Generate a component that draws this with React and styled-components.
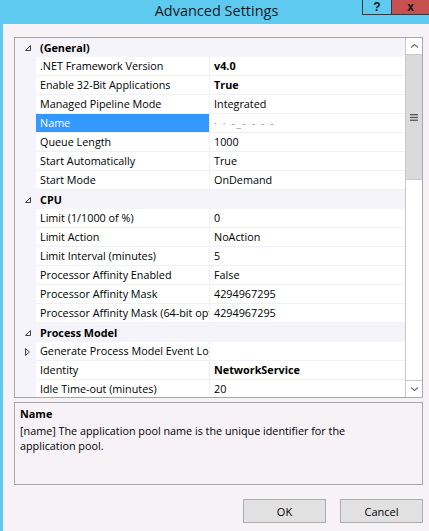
import React from "react";
import styled, { createGlobalStyle } from "styled-components";

const GlobalStyle = createGlobalStyle`
  html, body {
    margin: 0;
    padding: 0;
    background: #f6f2f6;
  }
  body {
    font-family: "Open Sans", "Noto Sans", "Liberation Sans", sans-serif;
    font-size: 10.8px;
    color: #000;
  }
`;

const Window = styled.div`
  width: 429px;
  height: 531px;
  box-sizing: border-box;
  border-left: 3px solid #5fcaf0;
  background: #f6f2f6;
  display: flex;
  flex-direction: column;
  overflow: hidden;
`;

const TitleBar = styled.div`
  height: 24px;
  flex: 0 0 24px;
  margin-left: -3px;
  background: #5fcaf0;
  display: grid;
  grid-template-columns: 1fr auto 1fr;
  align-items: start;
`;

const Title = styled.div`
  grid-column: 2;
  font-size: 14.5px;
  line-height: 21px;
  color: #1a1a1a;
  padding-left: 4px;
`;

const Controls = styled.div`
  grid-column: 3;
  justify-self: end;
  display: flex;
`;

const ControlButton = styled.div`
  height: 15px;
  width: ${(p) => p.$w}px;
  box-sizing: border-box;
  background: ${(p) => (p.$close ? "#c75050" : "transparent")};
  border: 1px solid #2e3b42;
  border-top: none;
  border-right: ${(p) => (p.$close ? "none" : "1px solid #2e3b42")};
  border-left: ${(p) => (p.$close ? "none" : "1px solid #2e3b42")};
  display: flex;
  align-items: center;
  justify-content: center;
  font-family: "Liberation Sans", sans-serif;
  font-weight: bold;
  font-size: 12px;
  line-height: 1;
  color: #111;
`;

const Content = styled.div`
  flex: 1;
  padding: 13px 6px 0 11px;
  display: flex;
  flex-direction: column;
`;

const Grid = styled.div`
  height: 361px;
  box-sizing: border-box;
  border: 1px solid #a7a7a7;
  background: #f4f4fa;
  display: flex;
  overflow: hidden;
`;

const Rows = styled.div`
  flex: 1;
  display: flex;
  flex-direction: column;
`;

const Row = styled.div`
  height: 19px;
  flex: 0 0 19px;
  display: grid;
  grid-template-columns: 21px 174px 1fr;
  background: #f4f4fa;
`;

const Toggle = styled.div`
  display: flex;
  align-items: center;
  justify-content: center;
  padding-left: 4px;
  color: #555;
`;

const Category = styled.div`
  grid-column: 2 / 4;
  padding-left: 4px;
  font-weight: bold;
  line-height: 19px;
  white-space: nowrap;
`;

const NameCell = styled.div`
  background: ${(p) => (p.$selected ? "#3399ff" : "#fff")};
  color: ${(p) => (p.$selected ? "#fff" : "#000")};
  border-bottom: 1px solid #f0f0f6;
  border-right: 1px solid #f0f0f6;
  box-sizing: border-box;
  padding-left: 4px;
  line-height: 18px;
  white-space: nowrap;
  overflow: hidden;
`;

const ValueCell = styled.div`
  background: #fff;
  border-bottom: 1px solid #f0f0f6;
  box-sizing: border-box;
  padding-left: 4px;
  line-height: 18px;
  white-space: nowrap;
  overflow: hidden;
  font-weight: ${(p) => (p.$bold ? "bold" : "normal")};
  color: ${(p) => (p.$masked ? "#9a9a9a" : "#000")};
  letter-spacing: ${(p) => (p.$masked ? "1.5px" : "normal")};
`;

const ScrollBar = styled.div`
  width: 16px;
  flex: 0 0 16px;
  border-left: 1px solid #c8c8c8;
  background: #f0f0f0;
  display: flex;
  flex-direction: column;
`;

const ArrowButton = styled.div`
  height: 17px;
  flex: 0 0 17px;
  box-sizing: border-box;
  background: #fff;
  border-bottom: ${(p) => (p.$down ? "none" : "1px solid #c8c8c8")};
  border-top: ${(p) => (p.$down ? "1px solid #c8c8c8" : "none")};
  display: flex;
  align-items: center;
  justify-content: center;
`;

const Thumb = styled.div`
  height: 124px;
  flex: 0 0 124px;
  background: #dadada;
  border-bottom: 1px solid #c8c8c8;
  display: flex;
  align-items: center;
  justify-content: center;
`;

const Track = styled.div`
  flex: 1;
  background: #fff;
`;

const Description = styled.div`
  margin-top: 4px;
  height: 83px;
  box-sizing: border-box;
  border: 1px solid #a7a7a7;
  padding: 2px 5px;
`;

const DescTitle = styled.div`
  font-weight: bold;
  line-height: 18px;
`;

const DescText = styled.div`
  line-height: 15px;
  width: 360px;
`;

const Footer = styled.div`
  margin-top: 14px;
  display: flex;
  justify-content: flex-end;
  gap: 14px;
`;

const Button = styled.button`
  width: 83px;
  height: 24px;
  box-sizing: border-box;
  background: #e1e1e1;
  border: 1px solid #adadad;
  font-family: inherit;
  font-size: 11px;
  color: #000;
  padding: 0;
`;

const Chevron = ({ down }) => (
  <svg width="9" height="6" viewBox="0 0 9 6">
    <path
      d={down ? "M1 1.5 L4.5 4.5 L8 1.5" : "M1 4.5 L4.5 1.5 L8 4.5"}
      fill="none"
      stroke="#707070"
      strokeWidth="1.2"
    />
  </svg>
);

const Grip = () => (
  <svg width="8" height="7" viewBox="0 0 8 7">
    <rect x="0" y="0" width="8" height="1.3" fill="#555" />
    <rect x="0" y="2.8" width="8" height="1.3" fill="#555" />
    <rect x="0" y="5.6" width="8" height="1.3" fill="#555" />
  </svg>
);

const Expanded = () => (
  <svg width="6" height="6" viewBox="0 0 6 6">
    <path d="M5.5 0.5 L5.5 5.5 L0.5 5.5 Z" fill="none" stroke="#444" strokeWidth="1" />
  </svg>
);

const Collapsed = () => (
  <svg width="5" height="8" viewBox="0 0 5 8">
    <path d="M0.5 0.5 L4.5 4 L0.5 7.5 Z" fill="none" stroke="#444" strokeWidth="1" />
  </svg>
);

const sections = [
  {
    title: "(General)",
    items: [
      { name: ".NET Framework Version", value: "v4.0", bold: true },
      { name: "Enable 32-Bit Applications", value: "True", bold: true },
      { name: "Managed Pipeline Mode", value: "Integrated" },
      { name: "Name", value: "· · -_- - - -", selected: true, masked: true },
      { name: "Queue Length", value: "1000" },
      { name: "Start Automatically", value: "True" },
      { name: "Start Mode", value: "OnDemand" },
    ],
  },
  {
    title: "CPU",
    items: [
      { name: "Limit (1/1000 of %)", value: "0" },
      { name: "Limit Action", value: "NoAction" },
      { name: "Limit Interval (minutes)", value: "5" },
      { name: "Processor Affinity Enabled", value: "False" },
      { name: "Processor Affinity Mask", value: "4294967295" },
      { name: "Processor Affinity Mask (64-bit option)", value: "4294967295" },
    ],
  },
  {
    title: "Process Model",
    items: [
      { name: "Generate Process Model Event Log Entry", value: "", collapsed: true },
      { name: "Identity", value: "NetworkService", bold: true },
      { name: "Idle Time-out (minutes)", value: "20" },
      { name: "Idle Time-out Action", value: "Terminate" },
    ],
  },
];

export default function App() {
  return (
    <>
      <GlobalStyle />
      <Window>
        <TitleBar>
          <Title>Advanced Settings</Title>
          <Controls>
            <ControlButton $w={30}>?</ControlButton>
            <ControlButton $w={37} $close>x</ControlButton>
          </Controls>
        </TitleBar>
        <Content>
          <Grid>
            <Rows>
              {sections.map((section) => (
                <React.Fragment key={section.title}>
                  <Row>
                    <Toggle>
                      <Expanded />
                    </Toggle>
                    <Category>{section.title}</Category>
                  </Row>
                  {section.items.map((item) => (
                    <Row key={item.name}>
                      <Toggle>{item.collapsed && <Collapsed />}</Toggle>
                      <NameCell $selected={item.selected}>{item.name}</NameCell>
                      <ValueCell $bold={item.bold} $masked={item.masked}>
                        {item.value}
                      </ValueCell>
                    </Row>
                  ))}
                </React.Fragment>
              ))}
            </Rows>
            <ScrollBar>
              <ArrowButton>
                <Chevron />
              </ArrowButton>
              <Thumb>
                <Grip />
              </Thumb>
              <Track />
              <ArrowButton $down>
                <Chevron down />
              </ArrowButton>
            </ScrollBar>
          </Grid>
          <Description>
            <DescTitle>Name</DescTitle>
            <DescText>
              [name] The application pool name is the unique identifier for the application pool.
            </DescText>
          </Description>
          <Footer>
            <Button>OK</Button>
            <Button>Cancel</Button>
          </Footer>
        </Content>
      </Window>
    </>
  );
}
